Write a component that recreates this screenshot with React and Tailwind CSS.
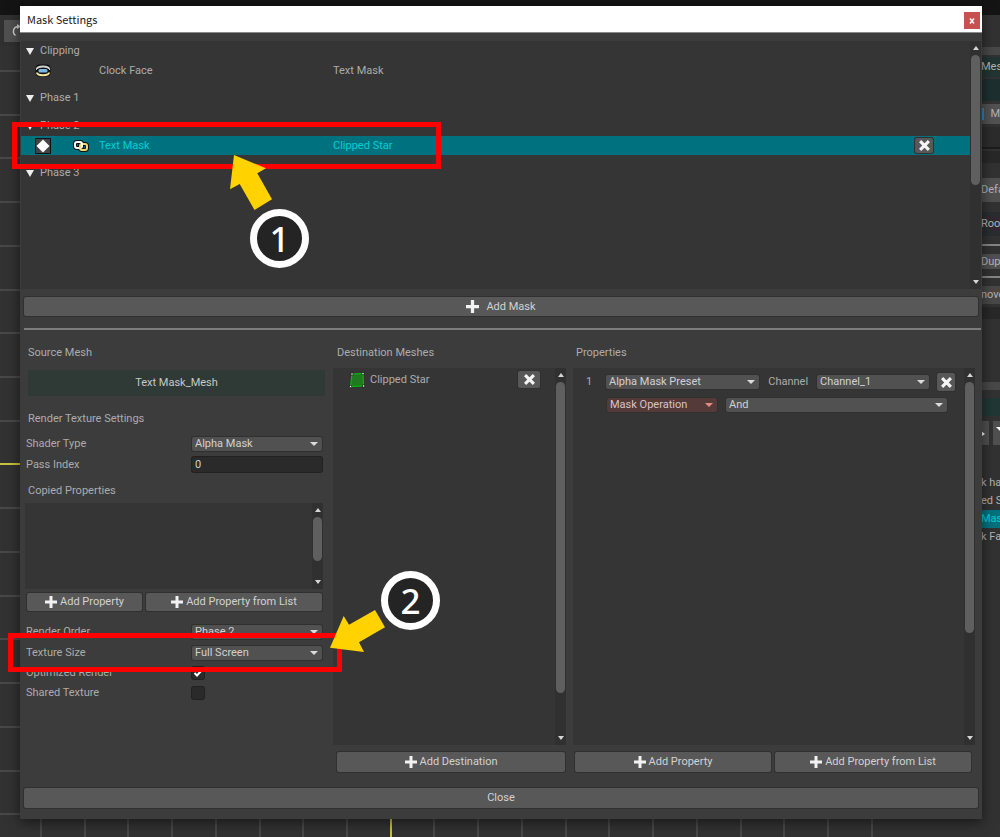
const GRID_STEP = 43.72;
const GRID_COLUMNS = 20;
const GRID_ROWS = 18;

const maskGroups = [
  {
    title: "Clipping",
    rows: [{ source: "Clock Face", target: "Text Mask", icon: ClippingIcon }],
  },
  { title: "Phase 1", rows: [] },
  {
    title: "Phase 2",
    rows: [
      {
        source: "Text Mask",
        target: "Clipped Star",
        icon: DiamondIcon,
        linked: true,
        selected: true,
      },
    ],
  },
  { title: "Phase 3", rows: [] },
];

function ClippingIcon() {
  return (
    <svg width="16" height="13" viewBox="0 0 16 13" aria-hidden="true">
      <rect x="0.500" y="0.500" width="15" height="12" rx="4" fill="#111" />
      <path d="M2 5C2 1.500 14 1.500 14 5" fill="none" stroke="#d0d0d0" strokeWidth="2" />
      <path d="M2 8.500C2 12 14 12 14 8.500" fill="none" stroke="#f3e6a0" strokeWidth="2" />
      <rect x="3.500" y="5" width="9" height="3.500" rx="1.500" fill="#7db8e0" />
      <path d="M1.500 4.500V6M14.500 4.500V6" stroke="#d0d0d0" strokeWidth="1" />
    </svg>
  );
}

function DiamondIcon() {
  return (
    <svg width="16" height="16" viewBox="0 0 16 16" aria-hidden="true">
      <rect width="16" height="16" fill="#111" />
      <rect x="1" y="1" width="14" height="14" fill="#444" />
      <path d="M8 1.500L14.500 8L8 14.500L1.500 8z" fill="#fff" />
    </svg>
  );
}

function ChainIcon() {
  return (
    <svg width="16" height="12" viewBox="0 0 16 12" fill="none" aria-hidden="true">
      <rect x="2" y="2" width="7" height="6" rx="2" stroke="#111" strokeWidth="4" />
      <rect x="7" y="4" width="7" height="6" rx="2" stroke="#111" strokeWidth="4" />
      <rect x="7" y="4" width="7" height="6" rx="2" stroke="#f3d873" strokeWidth="2" />
      <rect x="2" y="2" width="7" height="6" rx="2" stroke="#fff" strokeWidth="2" />
      <path d="M7 8.500V6" stroke="#f3d873" strokeWidth="2" />
    </svg>
  );
}

function MeshIcon() {
  return (
    <svg width="16" height="16" viewBox="0 0 16 16" aria-hidden="true">
      <path d="M3 2L14 1.500L14.500 14L1.500 14.500z" fill="#1f7a1f" stroke="#00c800" strokeWidth="1" />
      <g fill="#fff" stroke="#111" strokeWidth="0.600">
        <rect x="2" y="1" width="2" height="2" />
        <rect x="13" y="0.500" width="2" height="2" />
        <rect x="13.500" y="13" width="2" height="2" />
        <rect x="0.500" y="13.500" width="2" height="2" />
      </g>
    </svg>
  );
}

function PlusIcon({ size = 12 }) {
  return (
    <svg width={size} height={size} viewBox="0 0 12 12" aria-hidden="true">
      <path d="M6 0V12M0 6H12" stroke="#f2f2f2" strokeWidth="3" />
    </svg>
  );
}

function CrossIcon() {
  return (
    <svg width="11" height="11" viewBox="0 0 10 10" aria-hidden="true">
      <path d="M1 1L9 9M9 1L1 9" stroke="currentColor" strokeWidth="2.800" />
    </svg>
  );
}

function Caret({ className = "" }) {
  return (
    <svg width="8" height="4" viewBox="0 0 8 4" className={className} aria-hidden="true">
      <path d="M0 0H8L4 4z" fill="currentColor" />
    </svg>
  );
}

// Track with arrows; thumb is the share of the track that the handle covers.
function Scrollbar({ thumb }) {
  return (
    <div className="flex w-[11px] shrink-0 flex-col items-center bg-[#303030] py-1 text-[#d6d6d6]">
      <svg width="6" height="4" viewBox="0 0 6 4" className="my-px" aria-hidden="true">
        <path d="M0 4L3 0L6 4z" fill="currentColor" />
      </svg>
      <div className="my-1 w-full flex-1 px-px">
        <div className="w-full rounded-full bg-[#5f5f5f]" style={{ height: thumb }} />
      </div>
      <svg width="6" height="4" viewBox="0 0 6 4" className="my-px" aria-hidden="true">
        <path d="M0 0H6L3 4z" fill="currentColor" />
      </svg>
    </div>
  );
}

function Button({ children, plus, className = "h-5" }) {
  return (
    <button
      type="button"
      className={`flex items-center justify-center gap-[3px] rounded-xs bg-[#585858] text-[#d2d2d2] shadow-[0_0_0_1px_#303030] ${className}`}
    >
      {plus && <PlusIcon />}
      {children}
    </button>
  );
}

function RemoveButton({ label, className }) {
  return (
    <button
      type="button"
      aria-label={label}
      className={`flex items-center justify-center rounded-xs bg-[#585858] text-[#f4f4f4] shadow-[0_0_0_1px_#303030] ${className}`}
    >
      <CrossIcon />
    </button>
  );
}

function Select({
  id,
  label,
  value,
  className = "",
  tone = "bg-[#515151] text-[#d2d2d2]",
  caret = "text-[#dcdcdc]",
}) {
  return (
    <div className={`relative flex items-center ${className}`}>
      <select
        id={id}
        aria-label={label}
        defaultValue={value}
        className={`h-[14px] w-full appearance-none rounded-xs pr-4 pl-[3px] leading-[14px] shadow-[0_0_0_1px_#303030] ${tone}`}
      >
        <option>{value}</option>
      </select>
      <Caret className={`pointer-events-none absolute right-1 ${caret}`} />
    </div>
  );
}

function Field({ id, label, children, className = "h-[21px]" }) {
  return (
    <div className={`flex items-center pr-[3px] ${className}`}>
      <label htmlFor={id} className="w-[167px] shrink-0 pl-px">
        {label}
      </label>
      {children}
    </div>
  );
}

function MaskList() {
  return (
    <section className="mr-px ml-px flex h-[248px] bg-[#353535]">
      <div className="flex-1">
        {maskGroups.map(({ title, rows }) => (
          <div key={title} className="mb-2">
            <button type="button" className="flex h-5 items-center gap-[6px] pl-[5px]">
              <svg width="8" height="7" viewBox="0 0 8 7" aria-hidden="true">
                <path d="M0 0H8L4 7z" fill="#eee" />
              </svg>
              {title}
            </button>
            {rows.map(({ source, target, icon: Icon, linked, selected }) => (
              <div
                key={source}
                className={`flex h-[19px] items-center pl-[14px] ${selected ? "bg-[#00727f] text-[#00ced6]" : ""}`}
              >
                <div className="w-[38px]">
                  <Icon />
                </div>
                <div className="w-[26px]">{linked && <ChainIcon />}</div>
                <div className="w-[234px]">{source}</div>
                <div className="flex-1">{target}</div>
                {selected && <RemoveButton label="Remove mask" className="mr-[37px] h-[15px] w-[18px]" />}
              </div>
            ))}
          </div>
        ))}
      </div>
      <Scrollbar thumb="59%" />
    </section>
  );
}

function SourceColumn() {
  return (
    <section className="flex flex-col">
      <h2 className="h-5 pl-[3px] leading-[22px]">Source Mesh</h2>
      <button type="button" className="mt-2 ml-[3px] h-[26px] bg-[#2f3a36] text-[#c8c8c8]">
        Text Mask_Mesh
      </button>
      <h3 className="mt-3 mb-[5px] h-5 pl-[3px] leading-[22px]">Render Texture Settings</h3>
      <Field id="shader" label="Shader Type">
        <Select id="shader" value="Alpha Mask" className="flex-1" />
      </Field>
      <Field id="pass" label="Pass Index">
        <input
          id="pass"
          defaultValue="0"
          className="h-[15px] w-0 flex-1 rounded-xs bg-[#2a2a2a] px-[3px] text-[#d2d2d2] shadow-[0_0_0_1px_#212121]"
        />
      </Field>
      <h3 className="mt-[5px] mb-[3px] h-5 pl-[3px] leading-[22px]">Copied Properties</h3>
      <div className="mr-[2px] flex h-[86px] justify-end bg-[#353535]">
        <Scrollbar thumb="76%" />
      </div>
      <div className="mt-1 mr-[3px] mb-[10px] ml-[2px] flex gap-1">
        <Button plus className="h-[18px] flex-[115]">
          Add Property
        </Button>
        <Button plus className="h-[18px] flex-[176]">
          Add Property from List
        </Button>
      </div>
      <Field id="order" label="Render Order">
        <Select id="order" value="Phase 2" className="flex-1" />
      </Field>
      <Field id="size" label="Texture Size">
        <Select id="size" value="Full Screen" className="flex-1" />
      </Field>
      <Field id="optimized" label="Optimized Render" className="h-5">
        <Checkbox id="optimized" defaultChecked />
      </Field>
      <Field id="shared" label="Shared Texture" className="h-5">
        <Checkbox id="shared" />
      </Field>
    </section>
  );
}

function Checkbox(props) {
  return (
    <span className="relative flex">
      <input
        type="checkbox"
        className="peer h-3 w-3 appearance-none rounded-xs bg-[#2a2a2a] shadow-[0_0_0_1px_#212121]"
        {...props}
      />
      <svg
        viewBox="0 0 12 12"
        className="pointer-events-none absolute hidden h-3 w-3 peer-checked:block"
        aria-hidden="true"
      >
        <path d="M2.500 6L5 8.500L9.500 3.500" fill="none" stroke="#fff" strokeWidth="2" />
      </svg>
    </span>
  );
}

function DestinationColumn() {
  return (
    <section className="flex flex-col">
      <h2 className="h-5 pl-1 leading-[22px]">Destination Meshes</h2>
      <div className="mt-[6px] -mr-px flex flex-1 bg-[#353535]">
        <div className="flex flex-1 items-start pt-[3px] pr-[15px] pl-4">
          <div className="flex h-[18px] flex-1 items-center gap-[5px]">
            <MeshIcon />
            <span>Clipped Star</span>
          </div>
          <RemoveButton label="Remove destination" className="h-[17px] w-[22px]" />
        </div>
        <Scrollbar thumb="89%" />
      </div>
      <Button plus className="mt-[7px] ml-1 h-5">
        Add Destination
      </Button>
    </section>
  );
}

function PropertiesColumn() {
  return (
    <section className="flex flex-col">
      <h2 className="h-5 pl-[3px] leading-[22px]">Properties</h2>
      <div className="mt-[6px] flex flex-1 bg-[#353535]">
        <div className="flex-1 pt-[5px] pr-[9px] pl-[13px]">
          <div className="flex h-[18px] items-center">
            <span className="w-5">1</span>
            <Select label="Preset" value="Alpha Mask Preset" className="flex-[152]" />
            <label htmlFor="channel" className="px-[9px]">
              Channel
            </label>
            <Select id="channel" value="Channel_1" className="mr-2 flex-[111]" />
            <RemoveButton label="Remove property" className="h-[18px] w-[18px]" />
          </div>
          <div className="mt-[5px] flex h-[18px] items-center gap-[9px] pr-2 pl-[21px]">
            <Select
              label="Property"
              value="Mask Operation"
              className="flex-[110]"
              tone="bg-[#553a3a] text-[#d8c4c4]"
              caret="text-[#e58b84]"
            />
            <Select label="Operation" value="And" className="flex-[221]" />
          </div>
        </div>
        <Scrollbar thumb="72%" />
      </div>
      <div className="mt-[7px] mr-1 ml-[2px] flex gap-1">
        <Button plus className="h-5 flex-1">
          Add Property
        </Button>
        <Button plus className="h-5 flex-1">
          Add Property from List
        </Button>
      </div>
    </section>
  );
}

function MaskDialog() {
  return (
    <div
      role="dialog"
      aria-labelledby="dialog-title"
      className="relative mt-[6px] mr-[18px] mb-[18px] ml-5 flex flex-1 flex-col bg-[#3c3c3c] shadow-[0_3px_12px_rgba(0,0,0,0.55)]"
    >
      <header className="flex h-[27px] items-center justify-between border-b border-[#8a8a8a] bg-white pr-[2px] pl-[7px]">
        <h1
          id="dialog-title"
          className="pb-px font-['Noto_Sans_CJK_KR',sans-serif] text-[11px] font-normal text-[#1a1a1a]"
        >
          Mask Settings
        </h1>
        <button
          type="button"
          aria-label="Close window"
          className="mt-[3px] flex h-[17px] w-4 items-center justify-center bg-[#c75050] text-white"
        >
          <svg width="6" height="6" viewBox="0 0 6 6" aria-hidden="true">
            <path d="M1 0.500L5 5.500M5 0.500L1 5.500" stroke="currentColor" strokeWidth="1.500" />
          </svg>
        </button>
      </header>

      <div className="flex flex-1 flex-col pt-2">
        <MaskList />
        <button
          type="button"
          className="mx-1 mt-2 flex h-[19px] items-center justify-center gap-[7px] rounded-xs bg-[#585858] text-[#d2d2d2] shadow-[0_0_0_1px_#303030]"
        >
          <PlusIcon size={13} />
          Add Mask
        </button>
        <hr className="mt-3 mr-px ml-1 h-[2px] border-0 bg-[#7c7c7c]" />
        <div className="mt-3 grid flex-1 grid-cols-[300fr_232fr_402fr] gap-x-2 pr-[7px] pl-[5px]">
          <SourceColumn />
          <DestinationColumn />
          <PropertiesColumn />
        </div>
        <Button className="mx-1 mt-4 mb-[11px] h-5">Close</Button>
      </div>
    </div>
  );
}

function CanvasGrid() {
  return (
    <svg className="w-full flex-1" aria-hidden="true">
      {Array.from({ length: GRID_ROWS }, (_, i) => (
        <rect
          key={i}
          x="0"
          y={Math.round(24 + i * GRID_STEP)}
          width="100%"
          height="2"
          fill={i === 9 ? "#c9c33a" : "#484848"}
        />
      ))}
      {Array.from({ length: GRID_COLUMNS }, (_, i) => (
        <rect
          key={i}
          x={Math.round(40 + i * GRID_STEP)}
          y="0"
          width="2"
          height="100%"
          fill={i === 8 ? "#c9c33a" : "#484848"}
        />
      ))}
    </svg>
  );
}

function Inspector() {
  return (
    <aside className="flex w-[115px] flex-col items-end bg-[#323232]">
      <div className="flex w-[19px] flex-col whitespace-nowrap text-[#b4b4b4]">
        <div className="mt-[2px] h-2 bg-[#484848]" />
        <div className="mt-[2px] h-5 bg-[#223533] leading-5">Mes</div>
        <div className="mt-[2px] h-[22px] bg-[#1d302f]" />
        <div className="mt-[3px] flex h-5 items-center gap-[6px] bg-[#525252]">
          <span className="h-3 w-1 bg-[#2f86c4]" />M
        </div>
        <div className="mt-[3px] h-[22px] border-b-2 border-[#1d1d1d] bg-[#2c2c2c]" />
        <div className="mt-[2px] h-3 bg-[#282828]" />
        <div className="mt-[15px] h-6 bg-[#505050] leading-6">Defa</div>
        <div className="mt-[10px] h-6 bg-[#2a2c30] leading-6">Roo</div>
        <div className="mt-2 h-[2px] bg-[#858585]" />
        <div className="mt-2 h-[15px] bg-[#505050] leading-[15px]">Dupl</div>
        <div className="mt-[7px] h-[2px] bg-[#858585]" />
        <div className="mt-2 h-[18px] bg-[#484848] leading-[18px]">nove</div>
        <div className="mt-[3px] h-3 bg-[#282828]" />
        <div className="mt-[63px] h-2 bg-[#484848]" />
        <div className="mt-2 h-[18px] bg-[#213735]" />
        <div className="mt-[5px] flex h-6 justify-between">
          <span className="flex w-2 items-center bg-[#505050]">
            <svg width="4" height="6" viewBox="0 0 4 6" aria-hidden="true">
              <path d="M0 1L4 4L1 6H0z" fill="#fff" />
            </svg>
          </span>
          <span className="flex w-[7px] items-center justify-end overflow-hidden bg-[#505050] pb-2">
            <svg width="4" height="4" viewBox="0 0 4 4" aria-hidden="true">
              <path d="M0 0H4V4z" fill="#fff" />
            </svg>
          </span>
        </div>
        <ul className="mt-[29px] leading-[18px]">
          <li>k ha</li>
          <li>ed S</li>
          <li className="bg-[#00727f] text-[#00ced6]">Mas</li>
          <li>k Fa</li>
        </ul>
      </div>
    </aside>
  );
}

function Workspace() {
  return (
    <div className="absolute inset-0 flex flex-col bg-[#323232]">
      <div className="h-[15px] bg-[#141414]" />
      <div className="flex min-h-0 flex-1">
        <div className="flex flex-1 flex-col">
          <div className="flex h-[31px] items-center bg-[#303030] pl-1">
            <button
              type="button"
              aria-label="Rotate"
              className="flex h-[22px] w-8 items-center bg-[#505050] pl-2 text-[#d0d0d0]"
            >
              <svg width="14" height="14" viewBox="0 0 14 14" fill="none" aria-hidden="true">
                <path
                  d="M5.500 2.500A5 5 0 0 0 3.500 11.500M8 2A5.500 5.500 0 0 1 9 12"
                  stroke="currentColor"
                  strokeWidth="1.300"
                />
                <path d="M5 0L9 2.500L5 5z" fill="currentColor" />
              </svg>
            </button>
          </div>
          <CanvasGrid />
        </div>
        <div className="flex pt-[30px]">
          <Inspector />
        </div>
      </div>
    </div>
  );
}

function StepBadge({ number, className }) {
  return (
    <div
      className={`absolute flex h-[59px] w-[59px] items-center justify-center rounded-full border-[7px] border-white bg-[#242424] pb-px font-['Noto_Sans',sans-serif] text-[35px] leading-none font-medium text-white ${className}`}
    >
      {number}
    </div>
  );
}

function Annotations() {
  return (
    <div className="pointer-events-none absolute inset-0">
      <div className="absolute top-[122px] left-3 h-[47px] w-[429px] border-5 border-[#ff0000]" />
      <div className="absolute top-[633px] left-2 h-[39px] w-[334px] border-5 border-[#ff0000]" />
      <svg className="absolute inset-0 h-full w-full" fill="#ffd200" aria-hidden="true">
        <path d="M234 155L266 168.300L257.300 173.300L272 199.300L254.500 210L239.700 184L230 189.300z" />
        <path d="M330 647.700L343.700 616L349 624.700L375 610L385 627.300L359 642.300L364 652z" />
      </svg>
      <StepBadge number={1} className="top-[209px] left-[250px]" />
      <StepBadge number={2} className="top-[571px] left-[381px]" />
    </div>
  );
}

export default function App() {
  return (
    <main className="relative flex min-h-screen flex-col overflow-hidden font-[Roboto,sans-serif] text-[11px] leading-[18px] text-[#acacac]">
      <Workspace />
      <MaskDialog />
      <Annotations />
    </main>
  );
}
